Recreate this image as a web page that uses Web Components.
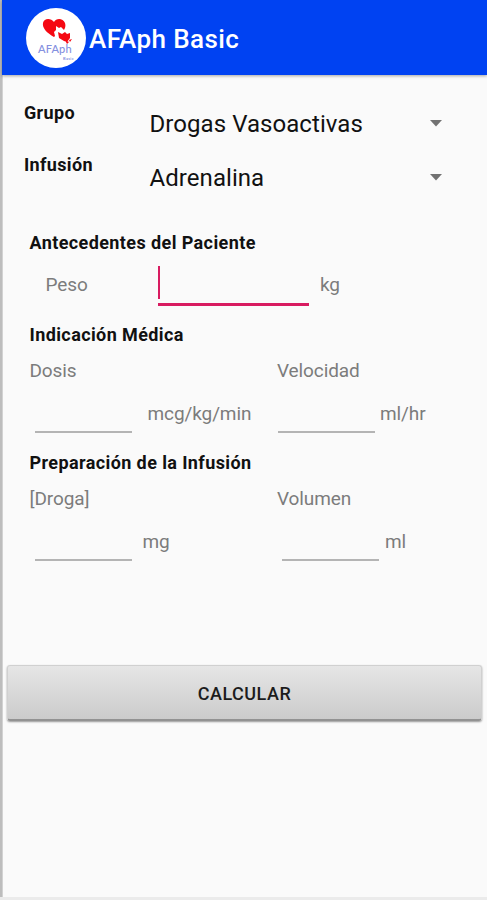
<!DOCTYPE html>
<html lang="es">
<head>
<meta charset="utf-8">
<title>AFAph Basic</title>
<style>
  body {
    margin: 0;
    background: #fafafa;
    font-family: Roboto, sans-serif;
  }
</style>
</head>
<body>
<afa-screen>
  <afa-toolbar slot="toolbar">AFAph Basic</afa-toolbar>
  <afa-selectors>
    <afa-caption slot="label">Grupo</afa-caption>
    <afa-caption slot="label">Infusión</afa-caption>
    <afa-spinner slot="value">Drogas Vasoactivas</afa-spinner>
    <afa-spinner slot="value">Adrenalina</afa-spinner>
  </afa-selectors>

  <afa-section style="--space: 26px">
    <span slot="title">Antecedentes del Paciente</span>
    <afa-field inline focused unit="kg" style="--line: 151px; --gap: 11px">Peso</afa-field>
  </afa-section>
  <afa-section>
    <span slot="title">Indicación Médica</span>
    <afa-field unit="mcg/kg/min" style="--inset: 5px; --gap: 16px">Dosis</afa-field>
    <afa-field unit="ml/hr" style="--inset: 1px; --gap: 5px">Velocidad</afa-field>
  </afa-section>
  <afa-section>
    <span slot="title">Preparación de la Infusión</span>
    <afa-field unit="mg" style="--inset: 5px; --gap: 11px">[Droga]</afa-field>
    <afa-field unit="ml" style="--inset: 5px; --gap: 6px">Volumen</afa-field>
  </afa-section>

  <afa-button slot="action">CALCULAR</afa-button>
</afa-screen>

<script>
const templates = {
  screen: `
    <style>
      :host {
        display: flex;
        flex-direction: column;
        box-sizing: border-box;
        height: 900px;
        overflow: hidden;
        padding-left: 3px;
        background: linear-gradient(to right, #bdbdbd 0 2px, #d2d2d2 2px 3px, #fafafa 3px);
        border-bottom: 3px solid #ebebeb;
        color: #111;
      }
      main {
        height: 590px;
      }
    </style>
    <slot name="toolbar"></slot>
    <main><slot></slot></main>
    <slot name="action"></slot>`,

  toolbar: `
    <style>
      :host {
        display: flex;
        align-items: center;
        gap: 3px;
        box-sizing: border-box;
        height: 75px;
        margin-left: -1px;
        padding: 2px 0 0 24px;
        background: #0042f2;
        box-shadow: 0 1px 3px rgb(0 0 0 / 0.35);
        color: #fff;
        font-size: 26px;
        font-weight: 500;
        letter-spacing: 0.4px;
      }
      svg {
        flex: none;
        width: 60px;
        height: 60px;
        margin-top: -1px;
      }
    </style>
    <svg viewBox="0 0 60 60">
      <circle cx="30" cy="30" r="30" fill="#fff"/>
      <path fill="#f50812" d="M28 29C21 25 16 20 17 15c1-5 8-5 11-1 2-4 9-4 11 1 1 3 0 5-1 7l-3-3-2 1-3-2v4l-2 2 1 4Z"/>
      <path fill="#f50812" d="m32 24 4 2 3-2 2 2 3-1v5l-3 4-3-1-5-3ZM39 32l4 2-2 2Zm4 0 3-1-2 3Z"/>
      <text x="12" y="45" textLength="34" font-family="Lato, sans-serif" font-size="11" fill="#8490e0">AFAph</text>
      <text x="37" y="51.5" textLength="11" font-family="Lato, sans-serif" font-size="4" fill="#6675d8">Basic</text>
    </svg>
    <slot></slot>`,

  selectors: `
    <style>
      :host {
        display: grid;
        grid-template-columns: 125.5px 1fr;
        align-items: start;
        height: 129px;
        padding-left: 21px;
      }
      .labels {
        padding-top: 12px;
        line-height: 52px;
      }
      .values {
        padding-top: 21px;
        line-height: 54px;
      }
    </style>
    <div class="labels"><slot name="label"></slot></div>
    <div class="values"><slot name="value"></slot></div>`,

  caption: `
    <style>
      :host {
        display: block;
        font-size: 18px;
        font-weight: 700;
        letter-spacing: 0.35px;
      }
    </style>
    <slot></slot>`,

  spinner: `
    <style>
      :host {
        display: flex;
        align-items: center;
        justify-content: space-between;
        box-sizing: border-box;
        height: 54px;
        padding: 2px 45px 0 0;
        font-size: 24px;
        letter-spacing: 0.06px;
        line-height: 52px;
      }
      svg {
        width: 12px;
        height: 7px;
        margin-top: -2px;
        fill: #727272;
      }
    </style>
    <slot></slot>
    <svg viewBox="0 0 12 7"><path d="M0 0h12L6 6.5z"/></svg>`,

  section: `
    <style>
      :host {
        display: block;
        padding: var(--space, 0) 0 0 26.5px;
      }
      h2 {
        margin: 0;
        font-size: 18px;
        font-weight: 700;
        letter-spacing: 0.4px;
        line-height: 26px;
      }
      .fields {
        display: grid;
        grid-template-columns: 247.5px 1fr;
      }
    </style>
    <h2><slot name="title"></slot></h2>
    <div class="fields"><slot></slot></div>`,

  field: `
    <style>
      :host {
        display: flex;
        flex-direction: column;
        height: 102px;
        color: #7c7c7c;
        font-size: 19px;
        letter-spacing: -0.1px;
      }
      label {
        height: 45px;
        line-height: 46px;
      }
      .entry {
        display: flex;
        align-items: flex-start;
        gap: var(--gap);
        padding-left: var(--inset);
        line-height: 42px;
        white-space: nowrap;
      }
      .box {
        position: relative;
        flex: none;
        box-sizing: border-box;
        width: var(--line, 97px);
        height: 40px;
        border-bottom: 2px solid #b4b4b4;
      }
      input {
        width: 100%;
        height: 100%;
        padding: 0;
        border: 0;
        background: none;
        font: inherit;
        outline: 0;
      }
      :host([inline]) {
        grid-column: 1 / -1;
        flex-direction: row;
        height: 66px;
      }
      :host([inline]) label {
        box-sizing: border-box;
        width: 128.5px;
        height: auto;
        padding-left: 16px;
        line-height: 58px;
      }
      :host([inline]) .entry {
        line-height: 58px;
      }
      :host([inline]) .box {
        height: 50px;
      }
      :host([focused]) .box {
        border-bottom: 3px solid #d81b60;
      }
      :host([focused]) .box::before {
        content: "";
        position: absolute;
        left: 0;
        bottom: 4px;
        width: 2px;
        height: 33px;
        background: #d81b60;
      }
    </style>
    <label><slot></slot></label>
    <div class="entry">
      <div class="box"><input type="text"></div>
      <span class="unit"></span>
    </div>`,

  button: `
    <style>
      :host {
        display: block;
        margin: 0 5px 0 4px;
      }
      button {
        display: block;
        width: 100%;
        height: 56px;
        padding: 2px 0 0;
        border: 1px solid #d0d0d0;
        border-bottom: 2px solid #929292;
        border-radius: 3px;
        background: linear-gradient(#e6e6e6, #cbcbcb);
        box-shadow: 0 1px 2px rgb(0 0 0 / 0.4);
        color: #1c1c1c;
        font: 500 18px Roboto, sans-serif;
        letter-spacing: 0.5px;
      }
    </style>
    <button type="button"><slot></slot></button>`,
};

class AfaElement extends HTMLElement {
  constructor(markup) {
    super();
    this.attachShadow({ mode: "open" });
    const fragment = document.createRange().createContextualFragment(markup);
    this.shadowRoot.appendChild(fragment);
  }
}

class AfaField extends AfaElement {
  constructor() {
    super(templates.field);
  }

  connectedCallback() {
    this.shadowRoot.querySelector(".unit").textContent = this.getAttribute("unit");
  }
}

customElements.define("afa-field", AfaField);

// The remaining elements only carry markup
for (const name of ["screen", "toolbar", "selectors", "caption", "spinner", "section", "button"]) {
  customElements.define(`afa-${name}`, class extends AfaElement {
    constructor() {
      super(templates[name]);
    }
  });
}
</script>
</body>
</html>
